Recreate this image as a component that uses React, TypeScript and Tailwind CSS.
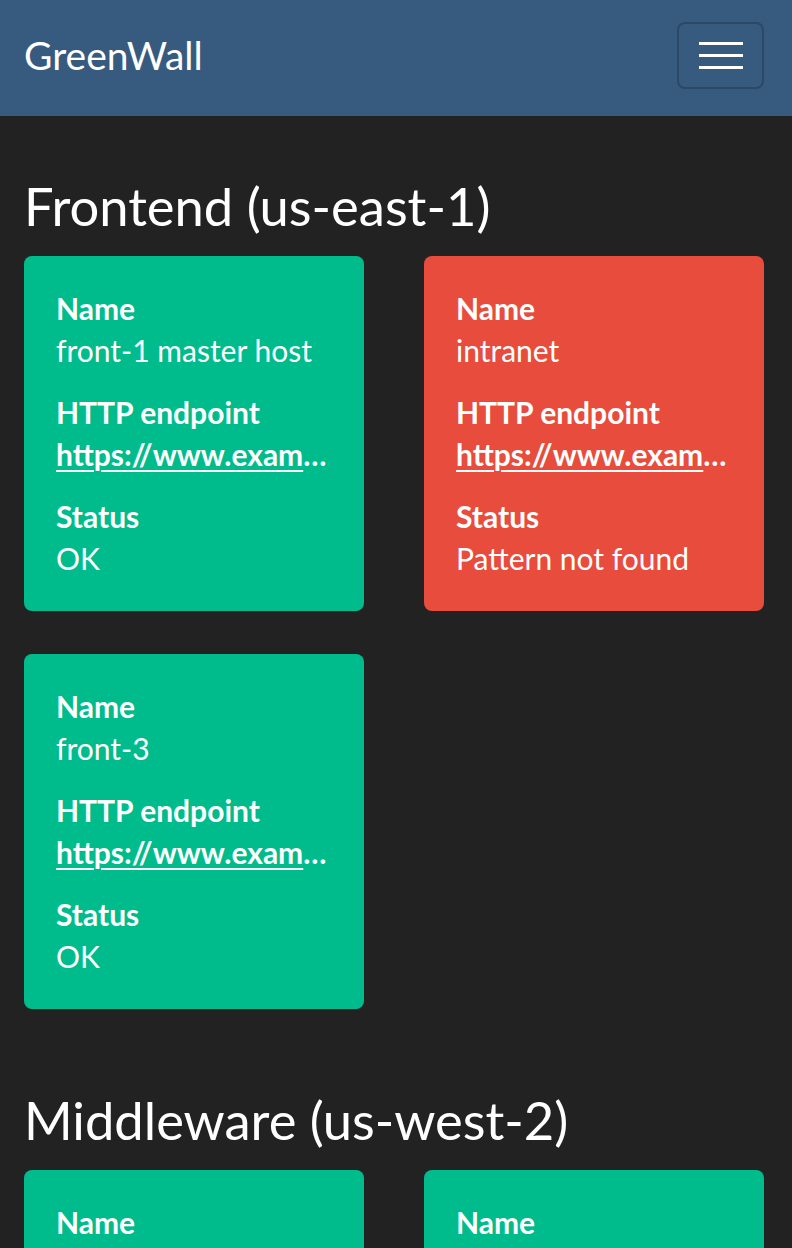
import React from "react";

type Host = {
  name: string;
  url: string;
  status: string;
  ok: boolean;
};

const sections: { title: string; hosts: Host[] }[] = [
  {
    title: "Frontend (us-east-1)",
    hosts: [
      { name: "front-1 master host", url: "https://www.example.com/health", status: "OK", ok: true },
      { name: "intranet", url: "https://www.example.com/intranet", status: "Pattern not found", ok: false },
      { name: "front-3", url: "https://www.example.com/front-3", status: "OK", ok: true },
    ],
  },
  {
    title: "Middleware (us-west-2)",
    hosts: [
      { name: "middle-1", url: "https://www.example.com/api", status: "OK", ok: true },
      { name: "middle-2", url: "https://www.example.com/api-2", status: "OK", ok: true },
    ],
  },
];

function HostCard({ host }: { host: Host }) {
  return (
    <div
      className={
        "rounded-[8px] pt-[31px] pb-[32px] px-[32px] text-white " +
        (host.ok ? "bg-[#00bc8c]" : "bg-[#e74c3c]")
      }
    >
      <dl className="flex flex-col gap-[20px] text-[30px] leading-[42px]">
        <div>
          <dt className="font-bold">Name</dt>
          <dd className="truncate">{host.name}</dd>
        </div>
        <div>
          <dt className="font-bold">HTTP endpoint</dt>
          <dd className="truncate font-bold">
            <a href={host.url} className="underline decoration-2 underline-offset-[4px]">
              {host.url}
            </a>
          </dd>
        </div>
        <div>
          <dt className="font-bold">Status</dt>
          <dd className="truncate">{host.status}</dd>
        </div>
      </dl>
    </div>
  );
}

export default function App() {
  return (
    <div className="min-h-screen bg-[#222222] font-['Lato','Liberation_Sans',sans-serif] text-white">
      <nav className="h-[116px] bg-[#375a7f] pl-[24px] pr-[28px] pb-[5px] flex items-center justify-between">
        <span className="text-[39px] leading-none">GreenWall</span>
        <button className="w-[87px] h-[67px] border-2 border-[#2b4866] rounded-[8px] flex flex-col items-center justify-center gap-[9px]">
          <span className="block w-[44px] h-[3px] bg-white" />
          <span className="block w-[44px] h-[3px] bg-white" />
          <span className="block w-[44px] h-[3px] bg-white" />
        </button>
      </nav>

      <main className="pl-[24px] pr-[28px] pt-[58px] pb-[40px] flex flex-col gap-[79px]">
        {sections.map((s) => (
          <section key={s.title}>
            <h2 className="text-[52.5px] leading-[1.2] mb-[19px]">{s.title}</h2>
            <div className="grid grid-cols-2 gap-x-[60px] gap-y-[43px]">
              {s.hosts.map((h) => (
                <HostCard key={h.name} host={h} />
              ))}
            </div>
          </section>
        ))}
      </main>
    </div>
  );
}
